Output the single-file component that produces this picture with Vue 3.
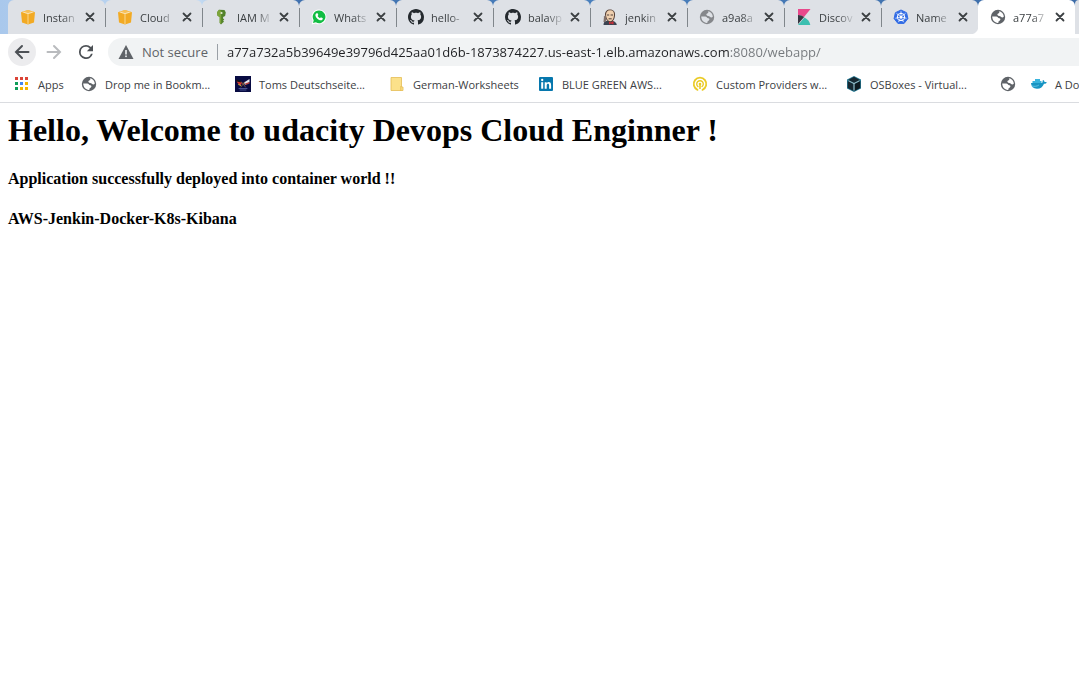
<script setup>
import { ref, h } from 'vue'

const address = ref('a77a732a5b39649e39796d425aa01d6b-1873874227.us-east-1.elb.amazonaws.com:8080/webapp/')

const tabs = [
  { title: 'Instan', icon: 'cube' },
  { title: 'Cloud', icon: 'cube' },
  { title: 'IAM M', icon: 'key' },
  { title: 'Whats', icon: 'whatsapp' },
  { title: 'hello-', icon: 'github' },
  { title: 'balavp', icon: 'github' },
  { title: 'jenkin', icon: 'jenkins' },
  { title: 'a9a8a', icon: 'globe-light' },
  { title: 'Discov', icon: 'kibana' },
  { title: 'Name', icon: 'kube' },
  { title: 'a77a7', icon: 'globe', active: true }
]

const bookmarks = [
  { title: 'Apps', icon: 'apps', size: 'short' },
  { title: 'Drop me in Bookm...', icon: 'globe', size: 'long' },
  { title: 'Toms Deutschseite...', icon: 'flags', size: 'long' },
  { title: 'German-Worksheets', icon: 'folder', size: 'medium' },
  { title: 'BLUE GREEN AWS...', icon: 'linkedin', size: 'long' },
  { title: 'Custom Providers w...', icon: 'provider', size: 'long' },
  { title: 'OSBoxes - Virtual...', icon: 'box', size: 'long' },
  { title: '', icon: 'globe', size: 'bare' },
  { title: 'A Do', icon: 'docker', size: 'long' }
]

const p = (d, fill, extra = {}) => ['path', { d, fill, ...extra }]
const line = (d, stroke, width = 1) => ['path', { d, fill: 'none', stroke, 'stroke-width': width, 'stroke-linecap': 'round' }]
const circle = (cx, cy, r, fill, extra = {}) => ['circle', { cx, cy, r, fill, ...extra }]
const rect = (x, y, width, height, fill, extra = {}) => ['rect', { x, y, width, height, fill, ...extra }]

const globe = (color, land) => [
  circle(8, 8, 7.2, color),
  p('M2.2 7.6h4c1.5 0 1.7 1.6 3.1 1.7 1.3.2 1.5 1.5.5 2.2-.9.6-1.4.8-1.5 2.4C5 14.2 2.3 11.5 2.2 7.6z', land),
  p('M8.7 2.2c3 .3 5.100 2.700 5.100 5.600-.9 1-2.200.9-2.900 0-.8-1-2.700-.5-3.400-1.700-.5-1 .3-1.600 1.200-1.900.8-.3.8-1.200 0-2z', land)
]

const dots = []
const dotColors = ['#db4437', '#db4437', '#db4437', '#0f9d58', '#4285f4', '#f4b400', '#0f9d58', '#f4b400', '#f4b400']
dotColors.forEach((c, i) => dots.push(rect(1 + (i % 3) * 5, 1 + Math.floor(i / 3) * 5, 3, 3, c)))

const spokes = Array.from({ length: 7 }, (_, i) => {
  const a = (i * 2 * Math.PI) / 7 - Math.PI / 2
  return line(`M8 8L${8 + 5.3 * Math.cos(a)} ${8 + 5.3 * Math.sin(a)}`, '#fff', 0.8)
})

const art = {
  cube: [
    p('M1 3.200 8 1l7 2.200-1 10.300L8 15.500 2 13.500z', '#f2aa24'),
    p('M1 3.200 8 1l7 2.200L8 5z', '#f7c057'),
    line('M8 5.200v9.500', '#fbdc9c', 0.9),
    line('M3.600 3.200 8 4.600l4.400-1.400', '#fbe4b4', 1)
  ],
  key: [
    p('M5 .7 10.500 1l1.300 2.500-.7 3.400-2 1.100v1.400l1.200 1-1.200 1.200.9 1.200-1.300 1L8.500 14 7 15.500 5.700 14V8L3.500 6.700 3 3.200z', '#53832b'),
    p('M3 3.200 5 .7l2.200 1.300v12.800L5.700 14V8L3.500 6.700z', '#7da53a'),
    circle(7.500, 4, 1.100, '#e5ebd5')
  ],
  whatsapp: [
    p('M8 .5a7.300 7.300 0 0 0-6.300 11L.7 15.500l4-1A7.400 7.400 0 1 0 8 .5z', '#fff'),
    p('M8 1.500a6.300 6.300 0 0 0-5.300 9.700L2 14l2.900-.8A6.300 6.300 0 1 0 8 1.500z', '#12bd43'),
    p('M5.500 4.200 6.600 4.300l.8 1.800-.8 1c.6 1.100 1.300 1.700 2.400 2.200l.9-1 1.900.9c.1 1.200-.7 2-1.900 2.100-2.700-.2-5.500-3-5.500-5.400 0-.7.5-1.300 1.100-1.700z', '#fff')
  ],
  github: [
    p('M8 0C3.580 0 0 3.580 0 8c0 3.540 2.290 6.530 5.470 7.590.4.070.55-.17.55-.38 0-.19-.01-.82-.01-1.490-2.010.37-2.530-.49-2.690-.94-.09-.23-.48-.94-.82-1.130-.28-.15-.68-.52-.01-.53.63-.01 1.080.58 1.230.82.72 1.210 1.870.87 2.330.66.070-.52.28-.87.51-1.070-1.780-.2-3.640-.89-3.640-3.950 0-.87.31-1.590.82-2.150-.08-.2-.36-1.020.08-2.120 0 0 .67-.21 2.200.82.64-.18 1.320-.27 2-.27s1.360.09 2 .27c1.530-1.040 2.200-.82 2.200-.82.44 1.100.16 1.920.08 2.120.51.56.82 1.270.82 2.150 0 3.070-1.870 3.750-3.650 3.950.29.25.54.73.54 1.480 0 1.070-.01 1.930-.01 2.200 0 .21.15.46.55.38A8.010 8.010 0 0 0 16 8c0-4.420-3.580-8-8-8z', '#24292e')
  ],
  jenkins: [
    p('M1.500 16c0-2.500 1-3.500 2.500-4h7c2 .6 3.500 2 3.800 4z', '#3b4350'),
    p('M3 6C2.800 2.500 5 .5 8 .5c3.500 0 5.500 2.500 5 6-.3 3.500-1.800 6.500-4.500 6.500S3.500 10.500 3 6z', '#584238'),
    p('M4 6c0-3 1.500-4.800 4.200-4.800C11 1.200 12.400 3 12 6.500c-.3 3.200-1.500 5.700-3.700 5.700S4.300 9.500 4 6z', '#efcfae'),
    line('M5.300 6h1.500M9 6h1.600M7 9.800h2.300', '#3c302d', 0.9),
    p('M2 7.500 3.500 6l1 5L3 13H1.500z', '#81706a'),
    p('M7 12.500 8.800 13.500l2.700-1.500v3.400l-2.700-1L7 15.500z', '#c92f38')
  ],
  globe: globe('#5f6368', '#fff'),
  'globe-light': globe('#85878b', '#dee1e6'),
  kibana: [
    p('M2 0h12.500L8 8C6 6.700 4 6.200 2 6z', '#e8488b'),
    p('M2 6c2.300.1 4.400.8 6.100 2L2 15z', '#343741'),
    p('M8.500 8.500c3.200 1.600 5.300 4.200 5.800 7.500H2z', '#3bbfb0')
  ],
  kube: [
    p('M8 1 13.600 3.700l1.300 5.900-3.800 4.800H4.900L1.100 9.600l1.300-5.900z', '#326ce5', { stroke: '#326ce5', 'stroke-linejoin': 'round' }),
    circle(8, 8, 3.700, 'none', { stroke: '#fff', 'stroke-width': 1 }),
    ...spokes,
    circle(8, 8, 1.200, '#fff')
  ],
  apps: dots,
  flags: [
    rect(0, 0, 16, 16, '#080b42'),
    p('M1.500 4.500 7 6.500 6 9 2.500 7z', '#df352d'),
    p('M1 3.500 6 5v1.500l-4.500-1z', '#151313'),
    p('M3 7.500 6 9v1L3.500 9z', '#f2ba37'),
    p('M9 6.500 14.500 3v3L10 9z', '#e6e8ef'),
    p('M10 7.500 14.500 6v1.500L10.500 9z', '#bc403c'),
    line('M6.500 6 10.500 11M9.500 6 6 11', '#a47439', 0.7),
    line('M4 12.500h8M5 14h6', '#5964a5', 0.8)
  ],
  folder: [
    p('M2 1.500h10.500v9.500H14v3.500H2z', '#fbe18a', { stroke: '#e4bd54', 'stroke-width': 0.8 }),
    line('M11.800 10.500v4', '#e9b94b', 0.8)
  ],
  linkedin: [
    rect(1, 1, 14, 14, '#0677ad', { rx: 1 }),
    rect(3.200, 6.200, 2, 6.500, '#fff'),
    circle(4.200, 4, 1.150, '#fff'),
    p('M6.700 6.200h2v1c.5-.8 1.100-1.200 2-1.200 1.700 0 2.400 1 2.400 3v3.700h-2V9.300c0-1-.3-1.600-1.100-1.600s-1.300.6-1.300 1.600v3.400h-2z', '#fff')
  ],
  provider: [
    line('M5.500 13.800A6.300 6.300 0 1 1 10.500 13.800', '#eacb27', 1.800),
    line('M6 10.600A3.300 3.300 0 1 1 10 10.600', '#eacb27', 1.400),
    circle(8, 8, 1.300, '#eacb27'),
    rect(7.200, 8, 1.600, 5, '#eacb27')
  ],
  box: [
    p('M8 0 15 3.500v9L8 16l-7-3.500v-9z', '#287e99'),
    p('M8 .8 14 3.900 8 7 2 3.900z', '#172932'),
    p('M1.700 5 7.500 8v7L1.700 12z', '#172932'),
    p('M14.300 5 8.500 8v7l5.800-3z', '#0e1a20'),
    line('M3 5 8 7.500 13 5M8 7.500V14', '#bac8cc', 0.8)
  ],
  docker: [
    p('M0 7h10.500c1-.1 1.400-1 1-2.200l.8-.7c.9.600 1.200 1.300 1.200 1.900.9-.2 1.700-.1 2.300.4-.5 1-1.500 1.400-2.800 1.300-1.200 3-3.300 5-7 5C2.300 12.700.3 10.500 0 7z', '#1794c3'),
    p('M1.500 5h9v2h-9zM4 3h5v2H4z', '#39b4dd'),
    line('M1 10c3 .8 5 .2 6.500-.7', '#71cceb', 0.8)
  ],
  back: [line('M14.500 8H2.500M8 2 2 8l6 6', '#4d5156', 2)],
  forward: [line('M1.500 8h12M8 2l6 6-6 6', '#b9bbbe', 2)],
  reload: [
    p('M13.650 2.350A7.960 7.960 0 0 0 8 0a8 8 0 1 0 7.730 10h-2.080A6 6 0 1 1 8 2c1.660 0 3.140.69 4.220 1.780L9 7h7V0z', '#4d5156')
  ],
  warning: [
    p('M8 1 15.500 15H.5z', '#5f6368'),
    rect(7.200, 6, 1.600, 4.500, '#f1f3f4'),
    rect(7.200, 11.500, 1.600, 1.600, '#f1f3f4')
  ],
  close: [line('M4.500 4.500l7 7M11.500 4.500l-7 7', '#3c4043', 1.800)]
}

const Icon = (props) =>
  h('svg', { viewBox: '0 0 16 16', 'aria-hidden': 'true' }, art[props.name].map(([tag, attrs]) => h(tag, attrs)))
Icon.props = ['name']
</script>

<template>
  <div class="browser">
    <nav class="tab-strip" aria-label="Tabs">
      <div v-for="(tab, i) in tabs" :key="i" class="tab" :class="{ active: tab.active, 'before-active': i === tabs.length - 2 }">
        <button class="tab-main" type="button">
          <Icon class="icon" :name="tab.icon" />
          <span class="tab-title">{{ tab.title }}</span>
        </button>
        <button class="tab-close" type="button" :aria-label="'Close ' + tab.title">
          <Icon class="icon" name="close" />
        </button>
      </div>
      <div class="tab-rest"></div>
    </nav>

    <div class="toolbar">
      <button class="nav-button current" type="button" aria-label="Back"><Icon class="icon" name="back" /></button>
      <button class="nav-button" type="button" aria-label="Forward"><Icon class="icon" name="forward" /></button>
      <button class="nav-button" type="button" aria-label="Reload"><Icon class="reload-icon" name="reload" /></button>
      <div class="omnibox">
        <Icon class="icon" name="warning" />
        <label class="security" for="address">Not secure</label>
        <input id="address" v-model="address" class="address" type="text" spellcheck="false" />
      </div>
    </div>

    <nav class="bookmarks" aria-label="Bookmarks">
      <a v-for="(mark, i) in bookmarks" :key="i" class="bookmark" :class="mark.size" href="#" :aria-label="mark.title || 'Bookmark'">
        <Icon class="icon" :name="mark.icon" />
        <span v-if="mark.title">{{ mark.title }}</span>
      </a>
    </nav>

    <main class="page">
      <h1>Hello, Welcome to udacity Devops Cloud Enginner !</h1>
      <h4>Application successfully deployed into container world !!</h4>
      <h4>AWS-Jenkin-Docker-K8s-Kibana</h4>
    </main>
  </div>
</template>

<style>
body {
  background: #fff;
}
</style>

<style scoped>
.browser {
  overflow: hidden;
  font-family: "Open Sans", "Noto Sans", sans-serif;
  font-size: 11px;
  color: #3c4043;
}
button {
  border: 0;
  padding: 0;
  background: none;
  font: inherit;
  color: inherit;
}
.icon {
  flex: none;
  width: 16px;
  height: 16px;
}
.tab-strip {
  display: flex;
  height: 34px;
  padding-left: 8px;
  background: linear-gradient(90deg, #a9c8ec 0, #c3daf2 200px, #3f70ae 300px, #4a80bd 600px, #3c6ba7 100%);
}
.tab {
  position: relative;
  display: flex;
  flex: none;
  align-items: center;
  width: 97px;
  background: #dee1e6;
  border-radius: 6px 6px 0 0;
}
.tab:not(.active, .before-active)::after {
  content: "";
  position: absolute;
  top: 8px;
  right: -1px;
  z-index: 1;
  width: 1px;
  height: 19px;
  background: #80868b;
}
.tab.active {
  background: #fff;
}
.tab.before-active {
  background: radial-gradient(circle at 0 0, #dee1e6 8px, #fff 9px) right bottom / 8px 8px no-repeat,
    linear-gradient(#dee1e6, #dee1e6) left top / 89px 100% no-repeat,
    linear-gradient(#dee1e6, #dee1e6) right top / 8px 26px no-repeat;
}
.tab-main {
  display: flex;
  align-items: center;
  gap: 7px;
  height: 34px;
  padding-left: 12px;
}
.tab-title {
  width: 38px;
  white-space: nowrap;
  text-align: left;
  mask-image: linear-gradient(90deg, #000 50%, transparent 95%);
}
.tab-close {
  display: flex;
  margin-left: 1px;
}
.tab-rest {
  flex: 1;
  background: #dee1e6;
  border-radius: 6px 0 0 0;
}
.toolbar {
  display: flex;
  align-items: center;
  height: 28px;
  padding: 4px 0 0 8px;
}
.nav-button {
  display: flex;
  flex: none;
  align-items: center;
  justify-content: center;
  width: 28px;
  height: 28px;
  margin-right: 4px;
  border-radius: 50%;
}
.nav-button.current {
  background: #ececee;
}
.reload-icon {
  width: 14px;
  height: 14px;
}
.omnibox {
  display: flex;
  flex: 1;
  align-items: center;
  height: 28px;
  margin-left: 4px;
  padding-left: 10px;
  background: #f1f3f4;
  border-radius: 14px 0 0 14px;
  font-size: 13px;
}
.security {
  flex: none;
  margin-left: 8px;
  padding-right: 9px;
  border-right: 1px solid #9aa0a6;
  line-height: 16px;
  color: #5f6368;
}
.address {
  flex: 1;
  min-width: 0;
  height: 28px;
  margin-left: 9px;
  padding: 0;
  border: 0;
  outline: 0;
  font: inherit;
  color: #202124;
  background: linear-gradient(90deg, #202124 503px, #74787c 503px);
  background-clip: text;
  -webkit-text-fill-color: transparent;
}
.bookmarks {
  display: flex;
  align-items: center;
  height: 36px;
  padding-left: 14px;
  border-bottom: 1px solid #dadce0;
}
.bookmark {
  display: flex;
  flex: none;
  align-items: center;
  gap: 8px;
  white-space: nowrap;
  color: #3c4043;
  text-decoration: none;
}
.short {
  width: 67px;
}
.medium {
  width: 149px;
}
.long {
  width: 154px;
}
.bare {
  width: 31px;
}
.page {
  padding: 9px 8px 8px;
  font-family: "Liberation Serif", serif;
  color: #000;
}
h1 {
  margin: 0 0 21px;
  font-size: 32px;
  line-height: 37px;
}
h4 {
  margin: 0 0 22px;
  font-size: 16px;
  line-height: 18px;
}
</style>
